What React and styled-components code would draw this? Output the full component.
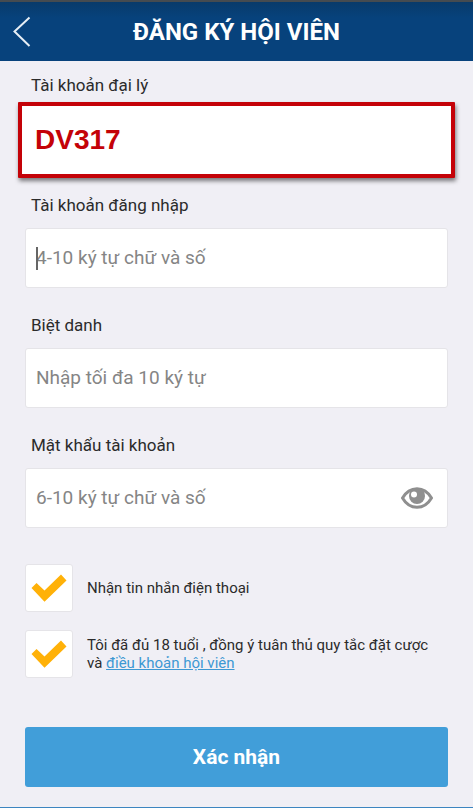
import React, { useState } from 'react'
import styled, { createGlobalStyle } from 'styled-components'

const GlobalStyle = createGlobalStyle`
  * {
    box-sizing: border-box;
  }
  body {
    margin: 0;
    background: #f0eff5;
    font-family: Roboto, 'Noto Sans', sans-serif;
    color: #2b2b2b;
  }
`

const Page = styled.div`
  display: flex;
  flex-direction: column;
  min-height: 100vh;
  border-bottom: 1px solid #3c85c0;
`

const Header = styled.header`
  display: grid;
  grid-template-columns: 44px 1fr 44px;
  align-items: center;
  height: 61px;
  border-top: 2px solid #454b50;
  background: linear-gradient(#083a6a, #07427c 16px);
`

const BackButton = styled.button`
  display: flex;
  justify-content: center;
  align-items: center;
  height: 48px;
  padding: 0;
  border: none;
  background: none;
  color: #e6eef5;
  cursor: pointer;
`

const Title = styled.h1`
  margin: 0;
  text-align: center;
  font-size: 24px;
  font-weight: 700;
  line-height: 28px;
  color: white;
`

const Form = styled.form`
  display: flex;
  flex-direction: column;
  padding: 13px 25px 20px;
`

const Field = styled.div`
  display: flex;
  flex-direction: column;
  gap: 12px;
  margin-bottom: 26px;
`

const Label = styled.label`
  padding-left: 6px;
  font-size: 17px;
  line-height: 22px;
`

const InputBox = styled.div`
  position: relative;
  display: flex;
  align-items: center;
  height: 60px;
  border: 1px solid #e5e4e8;
  border-radius: 3px;
  background: white;
`

const Input = styled.input`
  flex: 1;
  min-width: 0;
  height: 100%;
  padding: 0 10px 2px;
  border: none;
  outline: none;
  background: transparent;
  font-family: inherit;
  font-size: 19px;
  color: #333;
  &::placeholder {
    color: #858585;
    opacity: 1;
  }
`

const Caret = styled.span`
  position: absolute;
  top: 18px;
  left: 10px;
  width: 2px;
  height: 23px;
  background: #666;
`

// the agent code stands out, its frame is wider than the other fields
const AgentInput = styled.input`
  height: 76px;
  margin: -6px -7px -10px;
  padding: 0 13px;
  border: 4px solid #c40208;
  border-radius: 1px;
  outline: none;
  background: white;
  box-shadow: 1px 3px 4px rgba(0, 0, 0, 0.5);
  font-family: 'Liberation Sans', Arial, sans-serif;
  font-size: 28px;
  font-weight: 700;
  color: #c40208;
`

const EyeButton = styled.button`
  display: flex;
  margin-right: 14px;
  padding: 0;
  border: none;
  background: none;
  color: #8f8f8f;
  cursor: pointer;
`

const Options = styled.div`
  display: flex;
  flex-direction: column;
  gap: 18px;
  margin: 10px 0 49px;
`

const Option = styled.div`
  display: flex;
  align-items: center;
  gap: 14px;
`

const TickBox = styled.span`
  display: grid;
  flex: none;
  width: 48px;
  height: 48px;
  > * {
    grid-area: 1 / 1;
  }
  svg {
    place-self: center;
    pointer-events: none;
    visibility: hidden;
  }
  input:checked + svg {
    visibility: visible;
  }
`

const TickInput = styled.input`
  appearance: none;
  width: 100%;
  height: 100%;
  margin: 0;
  border: 1px solid #e5e4e8;
  border-radius: 3px;
  background: white;
  cursor: pointer;
`

const OptionLabel = styled.label`
  padding-right: 12px;
  font-size: 15px;
  line-height: 18px;
`

const TermsLink = styled.a`
  color: #3d98d3;
`

const SubmitButton = styled.button`
  height: 60px;
  border: none;
  border-radius: 3px;
  background: #419ed9;
  font-family: inherit;
  font-size: 21px;
  font-weight: 700;
  color: white;
  cursor: pointer;
`

const BackIcon = () => (
  <svg width="18" height="32" viewBox="0 0 18 32" fill="none" stroke="currentColor" strokeWidth="2">
    <path d="M16.500 1.500L1.500 15.500L16.500 30" />
  </svg>
)

const EyeIcon = () => (
  <svg width="32" height="22" viewBox="0 0 32 22">
    <path
      d="M1.500 11C5 5 10 1.700 16 1.700S27 5 30.500 11C27 17 22 20.300 16 20.300S5 17 1.500 11Z"
      fill="white"
      stroke="currentColor"
      strokeWidth="3"
      strokeLinejoin="round"
    />
    <circle cx="16" cy="9" r="8" fill="currentColor" />
    <circle cx="13" cy="7.500" r="3" fill="white" />
  </svg>
)

const CheckIcon = () => (
  <svg width="36" height="28" viewBox="0 0 36 28">
    <path d="M0.500 14L5.500 9L13.500 16.500L30 0.500L35.500 6.500L13.500 27.800Z" fill="#ffb108" />
  </svg>
)

const Tick = ({ id }) => (
  <TickBox>
    <TickInput id={id} type="checkbox" defaultChecked />
    <CheckIcon />
  </TickBox>
)

const App = () => {
  const [username, setUsername] = useState('')
  const [showPassword, setShowPassword] = useState(false)
  return (
    <Page>
      <GlobalStyle />
      <Header>
        <BackButton type="button" aria-label="Quay lại">
          <BackIcon />
        </BackButton>
        <Title>ĐĂNG KÝ HỘI VIÊN</Title>
      </Header>
      <Form onSubmit={e => e.preventDefault()}>
        <Field>
          <Label htmlFor="agent">Tài khoản đại lý</Label>
          <AgentInput id="agent" type="text" defaultValue="DV317" />
        </Field>
        <Field>
          <Label htmlFor="username">Tài khoản đăng nhập</Label>
          <InputBox>
            <Input
              id="username"
              type="text"
              placeholder="4-10 ký tự chữ và số"
              value={username}
              onChange={e => setUsername(e.target.value)}
            />
            {!username && <Caret />}
          </InputBox>
        </Field>
        <Field>
          <Label htmlFor="nickname">Biệt danh</Label>
          <InputBox>
            <Input id="nickname" type="text" placeholder="Nhập tối đa 10 ký tự" />
          </InputBox>
        </Field>
        <Field>
          <Label htmlFor="password">Mật khẩu tài khoản</Label>
          <InputBox>
            <Input id="password" type={showPassword ? 'text' : 'password'} placeholder="6-10 ký tự chữ và số" />
            <EyeButton type="button" aria-label="Hiện mật khẩu" onClick={() => setShowPassword(!showPassword)}>
              <EyeIcon />
            </EyeButton>
          </InputBox>
        </Field>
        <Options>
          <Option>
            <Tick id="sms" />
            <OptionLabel htmlFor="sms">Nhận tin nhắn điện thoại</OptionLabel>
          </Option>
          <Option>
            <Tick id="terms" />
            <OptionLabel htmlFor="terms">
              Tôi đã đủ 18 tuổi , đồng ý tuân thủ quy tắc đặt cược và <TermsLink href="#terms">điều khoản hội viên</TermsLink>
            </OptionLabel>
          </Option>
        </Options>
        <SubmitButton type="submit">Xác nhận</SubmitButton>
      </Form>
    </Page>
  )
}

export default App
